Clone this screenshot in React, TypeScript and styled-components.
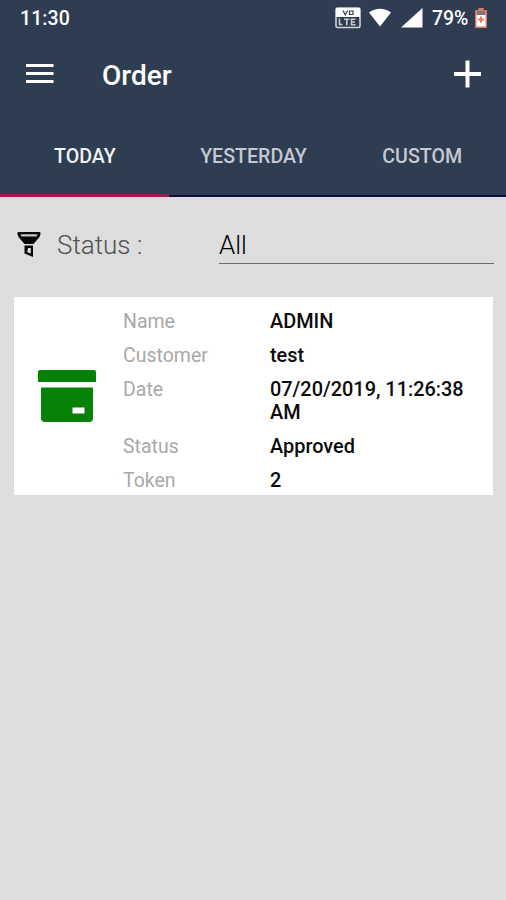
import React from "react";
import styled, { createGlobalStyle } from "styled-components";

const GlobalStyle = createGlobalStyle`
  * { box-sizing: border-box; }
  body { margin: 0; background: #dddddd; font-family: Roboto, sans-serif; }
`;

const Screen = styled.div`
  display: flex;
  flex-direction: column;
  width: 506px;
  height: 900px;
  overflow: hidden;
  background: #dddddd;
`;

const StatusBar = styled.div`
  display: flex;
  align-items: center;
  height: 36px;
  padding: 0 19px 0 20px;
  background: #2e3d52;
  color: #ffffff;
  font-size: 20px;
  font-weight: 500;
`;

const Clock = styled.span`
  flex: 1;
  font-size: 19.5px;
  letter-spacing: 0.1px;
`;

const StatusIcons = styled.div`
  display: flex;
  align-items: center;
  svg { display: block; }
`;

const Battery = styled.span`
  width: 37px;
  margin: 0 6px 0 9px;
  font-size: 19.4px;
`;

const AppBar = styled.header`
  display: flex;
  align-items: center;
  height: 76px;
  padding: 0 24px 0 26px;
  background: #2e3d52;
  color: #ffffff;
`;

const IconButton = styled.button`
  display: flex;
  padding: 0;
  border: 0;
  background: none;
  color: inherit;
`;

const Title = styled.h1`
  flex: 1;
  margin: 4px 0 0 48px;
  font-size: 28px;
  font-weight: 500;
  line-height: 32px;
`;

const Tabs = styled.nav`
  display: grid;
  grid-template-columns: repeat(3, 1fr);
  height: 85px;
  background: #2e3d52;
`;

const Tab = styled.button<{ $active?: boolean }>`
  padding: ${(p) => (p.$active ? "8px 0 0 1px" : "7px 0 0 1px")};
  border: 0;
  border-bottom: ${(p) => (p.$active ? "3px solid #a51650" : "2px solid #0b1147")};
  background: none;
  color: ${(p) => (p.$active ? "#f1f3f6" : "#c4c9d2")};
  font: 500 19.6px/24px Roboto, sans-serif;
`;

const FilterRow = styled.div`
  display: flex;
  align-items: center;
  height: 67px;
  margin: 14px 12px 19px 17px;
`;

const FilterLabel = styled.label`
  width: 162px;
  margin-left: 16px;
  color: #505050;
  font-size: 26px;
  font-weight: 300;
  line-height: 34px;
`;

const FilterField = styled.div`
  flex: 1;
  height: 38px;
  border-bottom: 1px solid #6c6c6c;
  color: #000000;
  font-size: 26px;
  font-weight: 300;
  line-height: 38px;
`;

const Card = styled.article`
  display: flex;
  height: 198px;
  margin: 0 13px 0 14px;
  background: #ffffff;
`;

const CardIcon = styled.div`
  display: flex;
  align-items: center;
  width: 109px;
  padding: 0 0 1px 24px;
`;

const Details = styled.dl`
  display: grid;
  flex: 1;
  grid-template-columns: 147px 210px;
  align-content: start;
  row-gap: 11px;
  margin: 0;
  padding-top: 13px;
  font-size: 19.9px;
  line-height: 23px;
`;

const Key = styled.dt`
  color: #a8a8a8;
  font-size: 19.5px;
`;

const Value = styled.dd`
  margin: 0;
  color: #0b0b0b;
  font-weight: 500;
`;

const details = [
  ["Name", "ADMIN"],
  ["Customer", "test"],
  ["Date", "07/20/2019, 11:26:38 AM"],
  ["Status", "Approved"],
  ["Token", "2"],
];

const VolteIcon = () => (
  <svg width="26" height="22" viewBox="0 0 26 22">
    <rect x="1" y="1" width="24" height="19.500" rx="1.5" fill="#2e3d52" stroke="#cfd4da" strokeWidth="1.6" />
    <path d="M1 1h24v9H1z" fill="#ffffff" />
    <path d="M8 3.500l2.300 4.500 2.300-4.500M14.500 4h3.500v3.500h-3.500z" fill="none" stroke="#2e3d52" strokeWidth="1.2" />
    <path d="M4.500 11.500v6h3M9 12.200h5.500M11.800 12.200v6M20.500 12.200h-4v5.600h4M16.500 15h3.500" fill="none" stroke="#c5cbd3" strokeWidth="1.6" />
  </svg>
);

const WifiIcon = () => (
  <svg width="22" height="19" viewBox="0 0 22 19">
    <path d="M0 4.500Q11-3 22 4.500L11 18.500Z" fill="#ffffff" />
  </svg>
);

const SignalIcon = () => (
  <svg width="22" height="20" viewBox="0 0 22 20">
    <path d="M21.500 0v19.500H0Z" fill="#ffffff" />
  </svg>
);

const BatteryIcon = () => (
  <svg width="12" height="20" viewBox="0 0 12 20">
    <path d="M3.500 0h5v2H11q1 0 1 1V19q0 1-1 1H1q-1 0-1-1V3q0-1 1-1h2.500Z" fill="#e27a62" />
    <path d="M2 3h8v4H2z" fill="#737b85" />
    <path d="M1.500 7h9v11.500h-9z" fill="#ffffff" />
    <path d="M6 8.500v6M3 11.500h6" stroke="#e27a62" strokeWidth="2" />
  </svg>
);

const FunnelIcon = () => (
  <svg width="24" height="26" viewBox="0 0 24 26">
    <path d="M1.500 0h21Q24 0 23.400 2.200L22.500 5 16.500 12h-9L1.500 5 .6 2.200Q0 0 1.500 0Z" fill="#080808" />
    <path d="M3.500 2.200h17l-1 2.300h-15z" fill="#c8c8c8" />
    <path d="M7.500 13.500h8.500V25L7.500 21.500Z" fill="#080808" />
    <path d="M11 16h2.800v5.500l-3.600-1.500Z" fill="#dddddd" />
  </svg>
);

const ArchiveIcon = () => (
  <svg width="58" height="52" viewBox="0 0 58 52">
    <path d="M2 0h54q2 0 2 2v10H0V2Q0 0 2 0Z" fill="#078207" />
    <path fillRule="evenodd" d="M3 17.500h52V48q0 4-4 4H7q-4 0-4-4ZM34.500 37.500v6h12v-6Z" fill="#078207" />
  </svg>
);

const MenuIcon = () => (
  <svg width="28" height="22" viewBox="0 0 28 22">
    <path d="M0 2.500h27.500M0 10.500h27.500M0 18.500h27.500" stroke="#ffffff" strokeWidth="3" />
  </svg>
);

const PlusIcon = () => (
  <svg width="28" height="28" viewBox="0 0 28 28">
    <path d="M13.500 0.500v27M0 14h27" stroke="#ffffff" strokeWidth="4" />
  </svg>
);

const SignalGroup = styled.div`
  display: flex;
  align-items: center;
  gap: 9px;
  margin-top: -1px;
`;

const WifiSlot = styled.span`
  display: flex;
  margin: 0 1px 0 -1px;
`;

export default function App() {
  return (
    <Screen>
      <GlobalStyle />
      <StatusBar>
        <Clock>11:30</Clock>
        <StatusIcons>
          <SignalGroup>
            <VolteIcon />
            <WifiSlot><WifiIcon /></WifiSlot>
            <SignalIcon />
          </SignalGroup>
          <Battery>79%</Battery>
          <BatteryIcon />
        </StatusIcons>
      </StatusBar>
      <AppBar>
        <IconButton aria-label="Menu"><MenuIcon /></IconButton>
        <Title>Order</Title>
        <IconButton aria-label="Add order"><PlusIcon /></IconButton>
      </AppBar>
      <Tabs>
        <Tab $active>TODAY</Tab>
        <Tab>YESTERDAY</Tab>
        <Tab>CUSTOM</Tab>
      </Tabs>
      <FilterRow>
        <FunnelIcon />
        <FilterLabel>Status :</FilterLabel>
        <FilterField>All</FilterField>
      </FilterRow>
      <Card>
        <CardIcon><ArchiveIcon /></CardIcon>
        <Details>
          {details.map(([key, value]) => (
            <React.Fragment key={key}>
              <Key>{key}</Key>
              <Value>{value}</Value>
            </React.Fragment>
          ))}
        </Details>
      </Card>
    </Screen>
  );
}
